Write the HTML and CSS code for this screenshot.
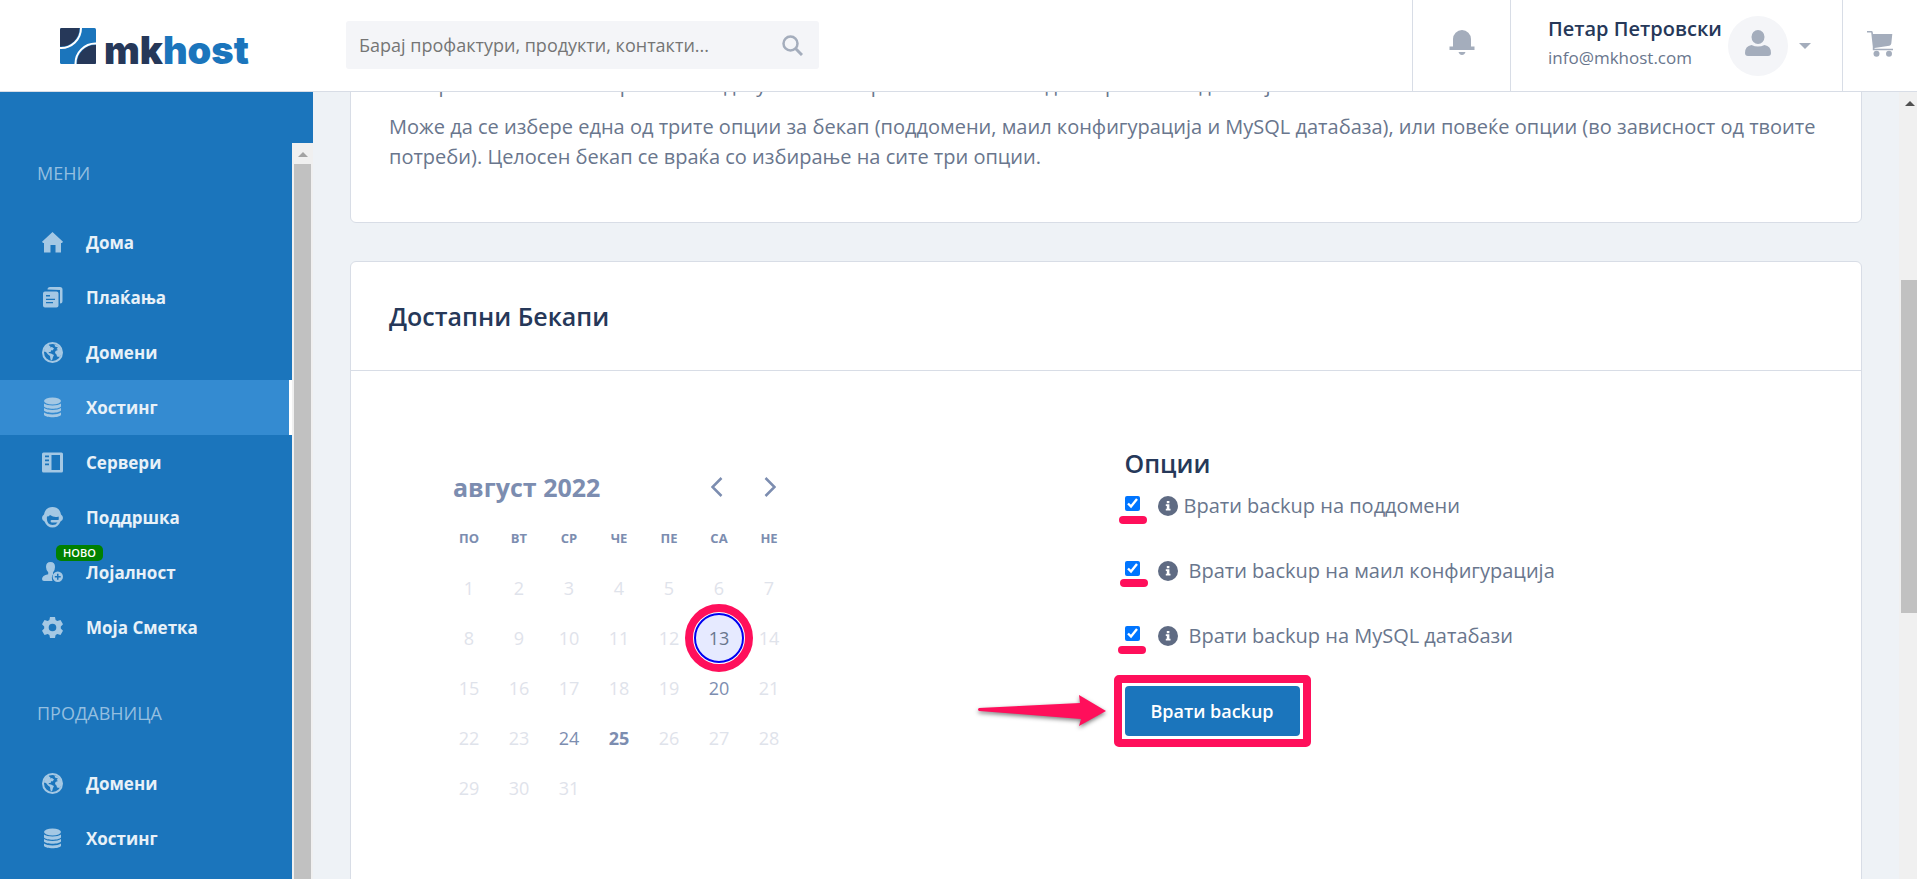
FILE: index.html
```
<!DOCTYPE html>
<html lang="mk">
<head>
<meta charset="utf-8">
<meta name="viewport" content="width=device-width, initial-scale=1">
<title>mkhost</title>
<link rel="stylesheet" href="styles.css">
</head>
<body>
<svg width="0" height="0" class="sprite" aria-hidden="true">
  <symbol id="i-globe" viewBox="0 0 21 21"><circle cx="10.500" cy="10.500" r="9.500" fill="none" stroke="currentColor" stroke-width="2"/><path d="M6 2.500 8.500 4.500 8 5.500 10 5 12 6.500 10.500 8.500 9.500 8 8.500 10 7 10 6.500 11 9 11.500 12 13 11 15 10 18.500 8.500 17.500 8 14 6 12.500 4 10 2 9.500 2.500 6z" fill="currentColor"/><path d="M12.500 2 17 4.500 19.500 8.500 19 13 17.500 15 15 14.500 14.500 12.500 13 11 13.500 9 16 8 14.500 7 16 5.500 13 4.500z" fill="currentColor"/></symbol>
  <symbol id="i-db" viewBox="0 0 21 21"><ellipse cx="10.500" cy="4" rx="8.500" ry="3.500" fill="currentColor"/><path d="M2 6.500c3 2.500 14 2.500 17 0v3c-2 3-15 3-17 0zM2 11c3 2.500 14 2.500 17 0v2.600c-2 3-15 3-17 0zM2 15.500c3 2.500 14 2.500 17 0v2.500c-2 3-15 3-17 0z" fill="currentColor"/></symbol>
  <symbol id="i-info" viewBox="0 0 20 20"><circle cx="10" cy="10" r="10" fill="currentColor"/><path d="M8.800 5h2.600v2.200H8.800zM7.800 8.300h3.600v4.500h1.100v1.600H7.800v-1.600h1V9.900h-1z" fill="#fff"/></symbol>
</svg>

<header class="topbar">
  <a class="logo" href="#" aria-label="mkhost">
    <svg width="36" height="36" viewBox="0 0 36 36"><rect width="36" height="36" rx="1.500" fill="#1b75bc"/><path d="M0 18.500V1.500Q0 0 1.500 0H19.500A18.500 18.500 0 0 1 0 18.500z" fill="#263859"/><path d="M36 17v17.500Q36 36 34.500 36H17A18.500 18.500 0 0 1 36 17z" fill="#263859"/><path d="M21 0A20 20 0 0 1 0 20M36 15.500A20 20 0 0 0 15.500 36" fill="none" stroke="#fff" stroke-width="2"/></svg>
    <span class="logo-text">mk<span>host</span></span>
  </a>
  <form class="search">
    <input type="search" aria-label="Барај" placeholder="Барај профактури, продукти, контакти...">
    <button type="button" aria-label="Барај"><svg width="21" height="21" viewBox="0 0 21 21" fill="none" stroke="currentColor"><circle cx="8.500" cy="8.500" r="7" stroke-width="2.500"/><path d="M13.500 13.500 20 20" stroke-width="3"/></svg></button>
  </form>
  <button class="top-cell bell" type="button" aria-label="Известувања"><svg width="26" height="26" viewBox="0 0 26 26" fill="currentColor"><path d="M4 9a9 9 0 0 1 18 0v7.500h3.500v3.500H.500v-3.500H4zM9.500 22h7q-1 3-3.500 3t-3.500-3z"/></svg></button>
  <div class="top-cell user">
    <div class="user-text"><strong>Петар Петровски</strong><span>info@mkhost.com</span></div>
    <span class="avatar"><svg width="26" height="26" viewBox="0 0 26 26" fill="currentColor"><ellipse cx="13" cy="7" rx="6.500" ry="7"/><path d="M6.500 15q6.500 3 13 0 6.500 1 6.500 8 0 3-3 3H3q-3 0-3-3 0-7 6.500-8z"/></svg></span>
    <button type="button" class="caret" aria-label="Профил"><svg width="12" height="6" viewBox="0 0 12 6" fill="currentColor"><path d="M0 0h12L6 6z"/></svg></button>
  </div>
  <button class="top-cell cart" type="button" aria-label="Кошничка"><svg width="26" height="26" viewBox="0 0 26 26" fill="currentColor"><path d="M0 0h4.500q1 0 1.200 1L6 3h19.300l-1 9.500q-.300 2-2 2.300L7.500 17v.700H26v1.500H5.800V15.800L4.200 1.500H0z"/><circle cx="9.500" cy="22.700" r="3"/><circle cx="22" cy="22.700" r="3"/></svg></button>
</header>

<div class="shell">
  <aside class="sidebar">
    <nav class="menu">
      <h2>МЕНИ</h2>
      <ul>
        <li><a href="#"><svg viewBox="0 0 21 21"><path d="M10.500 0 21 9.800l-1 1.200h-1v9.500h-5.500V13h-5v7.500H2V11H1L0 9.800z" fill="currentColor"/></svg>Дома</a></li>
        <li><a href="#"><svg viewBox="0 0 21 21"><path d="M5.500 2.500q0-2.500 2.500-2.500H18q2.500 0 2.500 2.500V14q0 2.500-2.500 2.500V3z" fill="currentColor"/><path fill-rule="evenodd" d="M3 4.500h11.500q2 0 2 2v12q0 2-2 2H3q-2 0-2-2v-12q0-2 2-2zM4 8v1.500h4V8zM4 11.800v1.200h9v-1.200zM4 15v1.200h7V15z" fill="currentColor"/></svg>Плаќања</a></li>
        <li><a href="#"><svg><use href="#i-globe"/></svg>Домени</a></li>
        <li><a class="active" href="#"><svg><use href="#i-db"/></svg>Хостинг</a></li>
        <li><a href="#"><svg viewBox="0 0 21 21"><path fill-rule="evenodd" d="M1.500.500h18q1.500 0 1.500 1.500v17q0 1.500-1.500 1.500h-18Q0 20.500 0 19V2Q0 .500 1.500.500zM9.500 3v15H18V3zM3 3.500v1.800h4V3.500zM3 7.500v1.800h4V7.500zM3 11.500v1.800h4v-1.800z" fill="currentColor"/></svg>Сервери</a></li>
        <li><a href="#"><svg viewBox="0 0 21 21"><path fill-rule="evenodd" d="M10.500 0q7 0 8.500 7.500 2 1 2 3.500t-2.500 3.500Q16 20.500 10.500 20.500T2.500 14.500Q0 13.500 0 11t2-3.500Q3.500 0 10.500 0zM5 9.500q-1 8.500 5.500 8.500 3.500 0 5-2.500H9.500q-2-1.700 0-2.500h7q.500-2 0-3.500-4 1.500-8.500-1.500-1 1.500-3 1.500z" fill="currentColor"/></svg>Поддршка</a></li>
        <li><a href="#"><svg viewBox="0 0 21 21"><path d="M8.500 0q4.500 0 4.500 5 0 3.500-2 5.500v2Q9 14.500 10.500 19H2q-2 0-2-2 0-3.500 6.200-4.800v-2Q4 8 4 5q0-5 4.500-5z" fill="currentColor"/><path fill-rule="evenodd" d="M15.800 9.500a5.200 5.200 0 1 1 0 10.400 5.200 5.200 0 0 1 0-10.400zM15 11.700V14h-2.200v1.500H15v2.200h1.500v-2.200h2.200V14h-2.200v-2.300z" fill="currentColor"/></svg>Лојалност<span class="badge">НОВО</span></a></li>
        <li><a href="#"><svg viewBox="0 0 21 21"><path fill-rule="evenodd" d="M8 0h5l.600 3 1.700 1L18.500 3l2.500 4.300-2.200 2.200v2l2.200 2.200-2.500 4.300-3.200-1-1.700 1-.600 3H8l-.600-3-1.700-1-3.200 1L0 13.700l2.200-2.200v-2L0 7.300 2.500 3l3.200 1 1.700-1zM10.500 6.700a3.800 3.800 0 1 0 0 7.600 3.800 3.800 0 0 0 0-7.600z" fill="currentColor"/></svg>Моја Сметка</a></li>
      </ul>
      <h2>ПРОДАВНИЦА</h2>
      <ul>
        <li><a href="#"><svg><use href="#i-globe"/></svg>Домени</a></li>
        <li><a href="#"><svg><use href="#i-db"/></svg>Хостинг</a></li>
      </ul>
    </nav>
    <div class="scroll side-scroll"><i class="scroll-up"></i><i class="thumb"></i></div>
  </aside>

  <main class="content">
    <section class="card intro">
      <p>Избира се ако е тоа потребен тип датум кога се врати бекапот на еден страна или дел мој</p>
      <p>Може да се избере една од трите опции за бекап (поддомени, маил конфигурација и MySQL датабаза), или повеќе опции (во зависност од твоите потреби). Целосен бекап се враќа со избирање на сите три опции.</p>
    </section>
    <section class="card backups">
      <h1>Достапни Бекапи</h1>
      <div class="columns">
        <div class="calendar">
          <div class="cal-head">
            <h3>август 2022</h3>
            <button type="button" aria-label="Претходен месец"><svg width="12" height="20" viewBox="0 0 12 20"><path d="M10.500 1 1.500 10l9 9"/></svg></button>
            <button type="button" aria-label="Следен месец"><svg width="12" height="20" viewBox="0 0 12 20"><path d="M1.500 1l9 9-9 9"/></svg></button>
          </div>
          <table>
            <thead><tr><th>ПО</th><th>ВТ</th><th>СР</th><th>ЧЕ</th><th>ПЕ</th><th>СА</th><th>НЕ</th></tr></thead>
            <tbody>
              <tr><td>1</td><td>2</td><td>3</td><td>4</td><td>5</td><td>6</td><td>7</td></tr>
              <tr><td>8</td><td>9</td><td>10</td><td>11</td><td>12</td><td class="marked"><button type="button" class="selected">13</button></td><td>14</td></tr>
              <tr><td>15</td><td>16</td><td>17</td><td>18</td><td>19</td><td><button type="button">20</button></td><td>21</td></tr>
              <tr><td>22</td><td>23</td><td><button type="button">24</button></td><td><button type="button" class="today">25</button></td><td>26</td><td>27</td><td>28</td></tr>
              <tr><td>29</td><td>30</td><td>31</td><td></td><td></td><td></td><td></td></tr>
            </tbody>
          </table>
        </div>
        <form class="options">
          <h3>Опции</h3>
          <div class="option mark-a"><input type="checkbox" id="o1" checked><label for="o1"><svg><use href="#i-info"/></svg>Врати backup на поддомени</label></div>
          <div class="option wide mark-b"><input type="checkbox" id="o2" checked><label for="o2"><svg><use href="#i-info"/></svg>Врати backup на маил конфигурација</label></div>
          <div class="option wide mark-c"><input type="checkbox" id="o3" checked><label for="o3"><svg><use href="#i-info"/></svg>Врати backup на MySQL датабази</label></div>
          <div class="submit">
            <button type="button">Врати backup</button>
            <svg class="arrow" width="136" height="40" viewBox="0 0 136 40"><path d="M4 17 105 12l-1-8 27 16-27 15 2-7L4 20q-2-1.500 0-3z" fill="#ff0f5b"/></svg>
          </div>
        </form>
      </div>
    </section>
  </main>
  <div class="scroll page-scroll"><i class="scroll-up"></i><i class="thumb"></i></div>
</div>
</body>
</html>
```
FILE: styles.css
```
:root {
  --blue: #1b75bc;
  --navy: #263859;
  --text: #69768d;
  --muted: #a4adbc;
  --line: #d8dde6;
  --pink: #ff0f5b;
}

* { box-sizing: border-box; }

body {
  margin: 0;
  height: 100vh;
  overflow: hidden;
  display: flex;
  flex-direction: column;
  background: #eef2f6;
  color: var(--text);
  font: 400 20px/30px "Open Sans", "Noto Sans", sans-serif;
}

h1, h2, h3, p, ul { margin: 0; padding: 0; }
ul { list-style: none; }
a { color: inherit; text-decoration: none; }
svg { display: block; flex: none; }
.sprite { position: absolute; }

button {
  padding: 0;
  border: 0;
  background: none;
  color: inherit;
  font: inherit;
}

/* Top bar */
.topbar {
  flex: none;
  display: flex;
  min-height: 92px;
  background: #fff;
  border-bottom: 1px solid var(--line);
  color: var(--muted);
}

.logo {
  display: flex;
  align-items: center;
  gap: 8px;
  width: 346px;
  padding-left: 60px;
}

.logo-text {
  color: var(--navy);
  font: 900 38px/44px Inter, sans-serif;
  padding-top: 8px;
}
.logo-text span { color: var(--blue); }

.search {
  display: flex;
  align-items: center;
  width: 473px;
  height: 48px;
  margin: 21px auto 0 0;
  padding: 0 16px 0 13px;
  border-radius: 3px;
  background: #f4f5f8;
}

.search input {
  flex: 1;
  min-width: 0;
  padding: 0;
  border: 0;
  outline: 0;
  background: none;
  font: 400 18px/24px "Open Sans", "Noto Sans", sans-serif;
}
.search input::placeholder { color: #757575; opacity: 1; }

.top-cell {
  display: flex;
  align-items: center;
  border-left: 1px solid var(--line);
}
.bell { width: 98px; justify-content: center; padding-bottom: 6px; }
.cart { width: 75px; padding: 0 0 3px 24px; }
.user { width: 332px; padding-left: 37px; }

.user-text {
  display: flex;
  flex-direction: column;
  width: 180px;
  white-space: nowrap;
  font-size: 17px;
  line-height: 28px;
  padding-bottom: 6px;
  color: var(--text);
}
.user-text strong { color: var(--navy); font-size: 20px; line-height: 30px; font-weight: 600; }

.avatar {
  display: grid;
  place-items: center;
  width: 60px;
  height: 60px;
  padding-bottom: 5px;
  border-radius: 50%;
  background: #f4f5f8;
}
.caret { margin-left: 11px; }

/* Shell */
.shell { flex: 1; min-height: 0; display: flex; }

.sidebar {
  flex: none;
  display: flex;
  width: 313px;
  overflow: hidden;
  background: var(--blue);
}

.menu { flex: 1; padding-top: 51px; color: #e8f1f8; }

.menu h2 {
  padding: 15px 37px 27px;
  color: #94bfe0;
  font-size: 18px;
  font-weight: 400;
  line-height: 30px;
}
.menu ul + h2 { padding-top: 43px; padding-bottom: 28px; }

.menu a {
  position: relative;
  display: flex;
  align-items: center;
  gap: 23px;
  height: 55px;
  padding-left: 42px;
  font-size: 17px;
  font-weight: 700;
}
.menu svg { width: 21px; height: 21px; color: #a4c8e4; }
.menu .active { background: #348bd1; border-right: 3px solid #fff; }

.badge {
  position: absolute;
  left: 56px;
  top: 0;
  padding: 0 7px;
  border-radius: 5px;
  background: #008000;
  color: #fff;
  font-size: 11px;
  line-height: 16px;
  font-weight: 600;
}

/* Scroll bars */
.scroll {
  flex: none;
  display: flex;
  flex-direction: column;
  align-items: center;
  background: #f0f0f0;
}
.scroll-up {
  border: 5px solid transparent;
  border-top: 0;
  border-bottom: 5px solid #a3a3a3;
}
.side-scroll { width: 21px; margin-top: 51px; padding: 9px 2px 0; }
.side-scroll .thumb { width: 17px; flex: 1; margin-top: 7px; background: #c1c1c1; }
.page-scroll { width: 18px; padding: 9px 0 0 2px; align-items: stretch; }
.page-scroll .scroll-up { align-self: center; border-bottom-color: #505050; margin-left: 2px; }
.page-scroll .thumb { height: 333px; margin-top: 174px; background: #c1c1c1; }

/* Content */
.content {
  flex: 1;
  min-width: 0;
  overflow: hidden;
  display: flex;
  flex-direction: column;
  gap: 38px;
  padding: 0 37px;
}

.card {
  flex: none;
  border: 1px solid var(--line);
  border-radius: 6px;
  background: #fff;
}

.intro {
  display: flex;
  flex-direction: column;
  gap: 12px;
  margin-top: -60px;
  padding: 37px 37px 50px 38px;
}

.backups { min-height: 700px; }
.backups h1 {
  padding: 37px 38px;
  border-bottom: 1px solid var(--line);
  color: var(--navy);
  font-size: 25px;
  font-weight: 600;
  line-height: 34px;
}

.columns {
  display: grid;
  grid-template-columns: 1fr 1fr;
  gap: 36px;
  padding: 74px 37px 74px 38px;
}
.columns h3 { font-size: 25px; line-height: 36px; }

/* Calendar */
.calendar { padding: 24px 0 0 55px; color: #7c8db0; }
.cal-head { display: flex; align-items: center; width: 350px; padding: 0 18px 0 9px; }
.cal-head h3 { flex: 1; font-weight: 700; }
.cal-head svg { fill: none; stroke: currentColor; stroke-width: 2.500; }
.cal-head button + button { margin-left: 41px; }

.calendar table { border-collapse: collapse; table-layout: fixed; width: 350px; margin-top: 8px; }
.calendar th, .calendar td { width: 50px; height: 50px; padding: 0; text-align: center; }
.calendar th { font-size: 13px; font-weight: 700; }
.calendar td { color: #dfe3eb; font-size: 18px; }
.calendar td button { width: 50px; height: 50px; border-radius: 50%; color: #7c8db0; display: block; }
.calendar .today { font-weight: 700; }
.calendar td .selected { border: 2px solid #0000f0; background: #e6eaff; color: var(--text); }

.marked { position: relative; }
.marked::after {
  content: "";
  position: absolute;
  inset: -9px;
  border: 8px solid var(--pink);
  border-radius: 50%;
}

/* Options */
.options h3 { color: var(--navy); font-weight: 600; margin-bottom: 2px; }
.option { position: relative; display: flex; align-items: center; height: 45px; margin-bottom: 20px; }
.option input { width: 15px; height: 15px; margin: 0 18px 4px 0; }
.option label { display: flex; align-items: center; gap: 6px; }
.option.wide label { gap: 11px; }
.option svg { width: 20px; height: 20px; color: #5f6b83; }

.option::after {
  content: "";
  position: absolute;
  left: -6px;
  top: 33px;
  width: 28px;
  height: 8px;
  border-radius: 4px;
  background: var(--pink);
}
.mark-b::after { left: -5px; top: 31px; }
.mark-c::after { left: -7px; top: 33px; }

.submit { position: relative; width: 175px; margin-top: 28px; }
.submit button {
  width: 100%;
  height: 50px;
  border-radius: 4px;
  background: var(--blue);
  color: #fff;
  font-size: 18px;
  font-weight: 600;
}
.submit::after {
  content: "";
  position: absolute;
  inset: -11px;
  border: 8px solid var(--pink);
  border-radius: 5px;
}
.arrow {
  position: absolute;
  right: 189px;
  top: 5px;
  filter: drop-shadow(0 2px 2px rgb(0 0 0 / 50%));
}
```
